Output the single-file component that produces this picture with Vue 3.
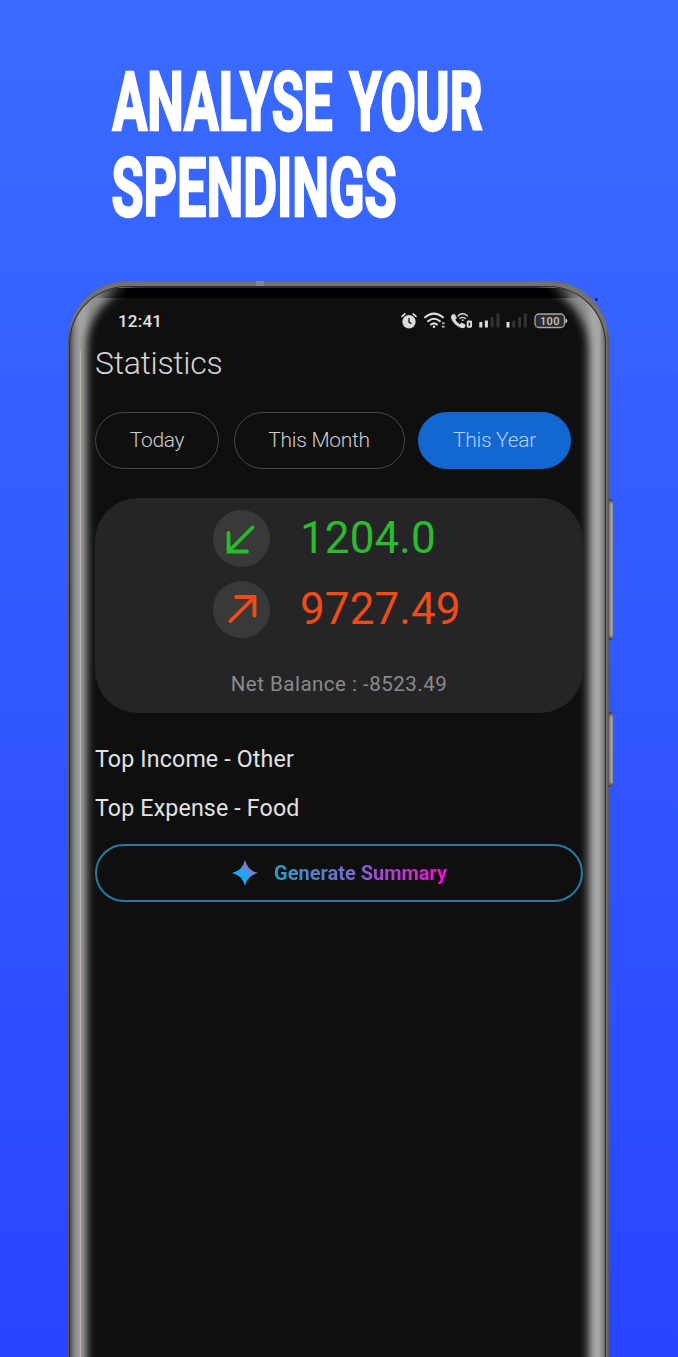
<script setup>
const periods = [
  { label: 'Today', cls: 'today' },
  { label: 'This Month', cls: 'month' },
  { label: 'This Year', cls: 'year' },
]
</script>

<template>
  <main class="poster">
    <svg class="headline" width="400" height="180" viewBox="100 55 400 180">
      <text x="112.500" y="130" textLength="220" lengthAdjust="spacingAndGlyphs">ANALYSE</text>
      <text x="349.500" y="130" textLength="133" lengthAdjust="spacingAndGlyphs">YOUR</text>
      <text x="111.500" y="216" textLength="285" lengthAdjust="spacingAndGlyphs">SPENDINGS</text>
    </svg>

    <section class="phone">
      <i class="antenna"></i>
      <i class="speck"></i>
      <i class="side-key volume"></i>
      <i class="side-key power"></i>
      <div class="glass">
        <i class="glint"></i>
        <div class="panel"></div>
        <div class="band"></div>
      </div>

      <div class="screen">
        <header class="status">
          <span class="clock">12:41</span>
          <svg class="status-icons" width="180" height="30" viewBox="395 306 180 30">
            <g fill="none" stroke="#dcdcdc" stroke-linecap="round">
              <circle cx="409" cy="321.700" r="6.700" fill="#dcdcdc" stroke="none" />
              <path d="M402 316.400l2.800-2.400M416 316.400l-2.800-2.400" stroke-width="1.700" />
              <path d="M409 318.500v3.500l2 1.300" stroke="#222" stroke-width="1.400" />
              <path d="M425 317.300q9-7.300 18 0" stroke-width="2" />
              <path d="M428 321.200q6-5 12 0" stroke-width="2" />
              <path d="M431 324.600q3-2.500 6 0" stroke-width="2" />
              <circle cx="434" cy="326.800" r="1.300" fill="#dcdcdc" stroke="none" />
              <path d="M442.800 323.200h1M442.800 326.800h1" stroke="#aaa" stroke-width="2" />
              <path d="M452.200 315.200l2.200-.8 2 3.500-1.500 1.900q1.800 3.300 5 4.800l1.800-1.600 3.400 2-.6 2.200q-1.200 1-3.500.2-7-2.600-9.400-9-.5-2 .6-3.200z" fill="#dcdcdc" stroke-width=".9" />
              <path d="M458 316q4.500-4.500 9.400 0M460 318.500q2.600-2.300 5.400 0" stroke-width="1.300" />
              <circle cx="462.700" cy="320.200" r=".9" fill="#dcdcdc" stroke="none" />
              <rect x="467.700" y="321.500" width="3.400" height="5.300" rx=".5" stroke-width="1.900" />
            </g>
            <g fill="#dcdcdc">
              <rect x="479.300" y="322" width="3" height="5.500" />
              <rect x="484.900" y="320.500" width="3" height="7" />
              <rect x="506.500" y="322" width="3" height="5.500" />
            </g>
            <g fill="#323232">
              <rect x="490.700" y="317" width="3" height="10.500" />
              <rect x="496.500" y="313.500" width="3" height="14" />
              <rect x="512.300" y="320.500" width="3" height="7" />
              <rect x="518" y="317" width="3" height="10.500" />
              <rect x="523.800" y="313.500" width="3" height="14" />
            </g>
            <rect x="535" y="314" width="29.500" height="13.500" rx="4" fill="#2c2c2c" stroke="#a5a5a5" stroke-width="1.300" />
            <path d="M565.500 318.200q3.500 2.600 0 5.200z" fill="#ddd" />
            <text class="battery" x="540" y="325" textLength="19.500">100</text>
          </svg>
        </header>

        <h1>Statistics</h1>

        <nav class="periods">
          <button v-for="p in periods" :key="p.cls" :class="['pill', p.cls]">{{ p.label }}</button>
        </nav>

        <section class="card">
          <div class="row income">
            <span class="disc">
              <svg width="57" height="57" viewBox="0 0 57 57"><path d="M39.500 17.500L15.500 41.500M15.500 23V41.500H34" /></svg>
            </span>
            <span class="amount">1204.0</span>
          </div>
          <div class="row expense">
            <span class="disc">
              <svg width="57" height="57" viewBox="0 0 57 57"><path d="M17.500 40L41.500 16M23 16H41.500V34.500" /></svg>
            </span>
            <span class="amount">9727.49</span>
          </div>
          <p class="net">Net Balance : -8523.49</p>
        </section>

        <p class="top top-income">Top Income - Other</p>
        <p class="top top-expense">Top Expense - Food</p>

        <button class="generate">
          <svg width="26" height="26" viewBox="0 0 26 26">
            <defs>
              <linearGradient id="spark" x1="0.3" y1="0.7" x2="0.9" y2="0.1">
                <stop offset="0.3" stop-color="#21a5ee" />
                <stop offset="0.7" stop-color="#9b70c4" />
                <stop offset="1" stop-color="#d050a0" />
              </linearGradient>
            </defs>
            <path d="M13 0Q15.500 10.500 26 13Q15.500 15.500 13 26Q10.500 15.500 0 13Q10.500 10.500 13 0z" fill="url(#spark)" />
          </svg>
          <span>Generate Summary</span>
        </button>
      </div>
    </section>
  </main>
</template>

<style>
body { margin: 0; background: #2947ff; }
</style>

<style scoped>
* { box-sizing: border-box; }
.poster {
  display: flow-root;
  width: 678px;
  height: 1357px;
  overflow: hidden;
  background: linear-gradient(#3a6bff, #2945ff);
  font-family: Roboto, "Liberation Sans", sans-serif;
}
.headline { display: block; overflow: visible; margin: 55px 0 0 100px; }
.headline text {
  font: 700 81.500px Roboto, sans-serif;
  fill: #fff;
  stroke: #fff;
  stroke-width: 2.600;
}
.phone {
  position: relative;
  width: 541px;
  height: 1200px;
  margin: 46px 0 0 68px;
  border-radius: 60px 60px 0 0;
  background: linear-gradient(to right, #555, #737376 3px, #737376 538px, #555);
  box-shadow: inset 0 1px 1px #6b6b70;
}
.antenna { position: absolute; left: 188px; top: 0; width: 8px; height: 5px; background: #88888c; }
.speck { position: absolute; left: 527px; top: 17px; width: 3px; height: 3px; border-radius: 50%; background: #222836; }
.side-key {
  position: absolute;
  left: 541px;
  width: 4px;
  border-radius: 0 3px 3px 0;
  background: linear-gradient(#333, transparent 5px, transparent calc(100% - 5px), #333), linear-gradient(to right, #777, #a5a5ad 60%, #8c8c9c);
}
.volume { top: 218px; height: 141px; }
.power { top: 431px; height: 75px; }
.glass {
  position: absolute;
  inset: 5px 3px 0 1px;
  overflow: hidden;
  border: solid #2c2c2c;
  border-width: 1px 1px 0;
  border-radius: 58px 58px 0 0;
  background: linear-gradient(to right, #505050, #808080 4px, #a2a2a2 9px, #a2a2a2 14px, #909090 22px, #909090 514px, #a8a8a8 523px, #a6a6a6 529px, #6c6c6c 535px);
}
.glint { position: absolute; left: 10px; top: 64px; bottom: 0; width: 1px; background: #c4c4c4; }
.panel {
  position: absolute;
  inset: -3px 17px -20px 17px;
  border-radius: 64px 64px 0 0;
  background: #0f0f0f;
  filter: blur(4px);
}
.band {
  position: absolute;
  inset: 1px 24px auto 24px;
  height: 10px;
  background: linear-gradient(to right, transparent, #000 34px, #000 calc(100% - 34px), transparent);
}
.screen {
  position: relative;
  display: flex;
  flex-direction: column;
  width: 488px;
  margin-left: 27px;
  padding-top: 25px;
}
.status { display: flex; justify-content: space-between; height: 30px; }
.clock { margin: 5px 0 0 23px; color: #e4e4e4; font-size: 17px; font-weight: 500; line-height: 20px; letter-spacing: 0.200px; }
.status-icons { margin-right: 8px; }
.battery { font: 500 11px Roboto, sans-serif; fill: #c8c8c8; }
h1 { margin: 7px 0 0; color: #d4d4d4; font-size: 32px; line-height: 40px; font-weight: 300; letter-spacing: -0.300px; }
.periods { display: flex; margin-top: 29px; height: 57px; }
.pill {
  padding: 0;
  border: 1px solid #484848;
  border-radius: 29px;
  background: transparent;
  color: #cdcdcd;
  font: 300 21px/55px Roboto, sans-serif;
  letter-spacing: -0.300px;
}
.today { width: 124px; }
.month { width: 171px; margin-left: 14.500px; }
.year { width: 153px; margin-left: 13.500px; background: #1267d0; border-color: #1267d0; color: #b8d2ee; }
.card { display: flex; flex-direction: column; height: 215px; margin-top: 29px; padding-top: 12px; border-radius: 43px; background: #252527; }
.row { display: flex; align-items: center; height: 57px; padding-left: 118px; }
.row + .row { margin-top: 14px; }
.disc { width: 57px; height: 57px; border-radius: 50%; background: #39393a; }
.disc svg { display: block; fill: none; stroke: currentColor; stroke-width: 3.800; stroke-linecap: round; stroke-linejoin: miter; }
.amount { margin-left: 30px; font-size: 44px; line-height: 57px; font-weight: 400; letter-spacing: 0.100px; }
.income { color: #29bd2d; }
.expense { color: #f04b18; }
.net { margin: 33px 0 0; text-align: center; color: #8a8a8b; font-size: 20.500px; line-height: 26px; letter-spacing: 0.500px; }
.top { margin: 0; color: #e2e2e2; font-size: 23.200px; line-height: 30px; letter-spacing: 0.150px; }
.top-income { margin-top: 31px; }
.top-expense { margin-top: 19px; }
.generate {
  display: flex;
  align-items: center;
  height: 58px;
  margin-top: 21px;
  padding: 0 0 0 135px;
  border: 2px solid #277a9e;
  border-radius: 29px;
  background: transparent;
}
.generate span {
  margin-left: 16px;
  background: linear-gradient(to right, #2e9bc8, #7a68cf 45%, #f010d8 95%);
  background-clip: text;
  color: transparent;
  font: 700 20px/30px Roboto, sans-serif;
}
</style>
